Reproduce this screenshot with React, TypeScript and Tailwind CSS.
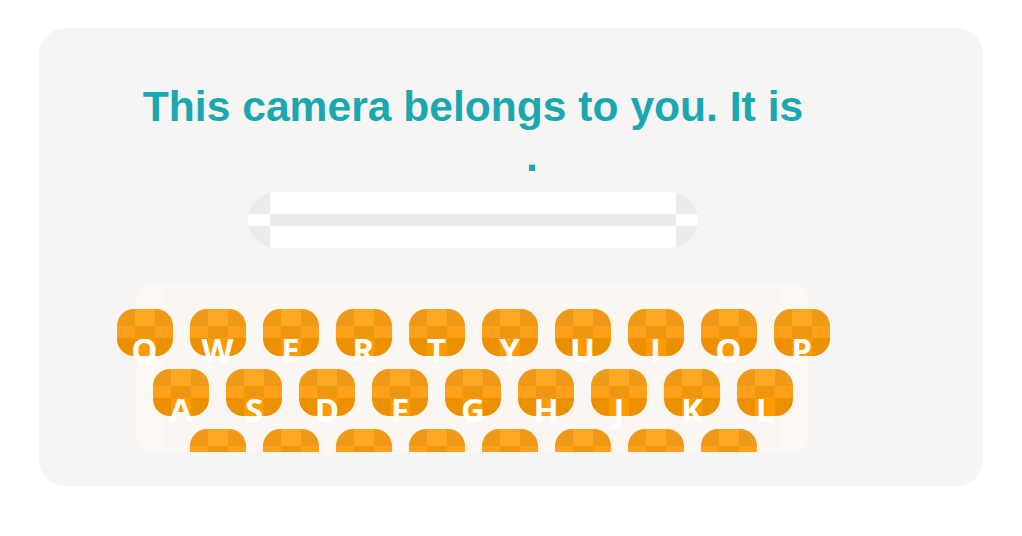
import React from "react";

const ROWS = [
  ["Q", "W", "E", "R", "T", "Y", "U", "I", "O", "P"],
  ["A", "S", "D", "F", "G", "H", "J", "K", "L"],
  ["Z", "X", "C", "V", "B", "N", "M", "⌫"],
];

// the key art: a 3x3 tile that shows its slices
function KeyTile() {
  return (
    <div className="grid h-[47px] w-[56px] grid-cols-[18px_20px_18px] grid-rows-[17px_12px_18px] overflow-hidden rounded-[17px]">
      <div className="bg-[#ee9a18]" />
      <div className="bg-[#ffa622]" />
      <div className="bg-[#ee9a18]" />
      <div className="bg-[#ffa01a]" />
      <div className="bg-[#ee960e]" />
      <div className="bg-[#ffa01a]" />
      <div className="bg-[#eb9100]" />
      <div className="bg-[#ff9a00]" />
      <div className="bg-[#eb9100]" />
    </div>
  );
}

function Key({ label }: { label: string }) {
  return (
    <div className="relative shrink-0">
      <KeyTile />
      <span className="absolute inset-x-0 top-[24px] text-center font-['Open_Sans',sans-serif] text-[33px] font-bold leading-none text-white">
        {label}
      </span>
    </div>
  );
}

function AnswerField() {
  return (
    <div className="grid h-[56px] w-[450px] grid-cols-[22px_1fr_22px] grid-rows-[22px_12px_22px] overflow-hidden rounded-full">
      <div className="bg-[#ebebeb]" />
      <div className="bg-white" />
      <div className="bg-[#ebebeb]" />
      <div className="bg-white" />
      <div className="bg-[#ebebeb]" />
      <div className="bg-white" />
      <div className="bg-[#ebebeb]" />
      <div className="bg-white" />
      <div className="bg-[#ebebeb]" />
    </div>
  );
}

export default function App() {
  return (
    <div className="min-h-screen bg-white px-[39px] pt-[28px]">
      <div className="h-[458px] rounded-[26px] bg-[#f6f5f4] pl-[54px] pt-[53px]">
        <div className="flex w-[760px] flex-col items-center">
          <h1 className="w-full text-center font-['Liberation_Sans',Arial,sans-serif] text-[42.6px] font-bold leading-[50px] text-[#19a8b0]">
            This camera belongs to you. It is{" "}
            <span className="whitespace-nowrap">
              <span className="inline-block w-[118px]" />.
            </span>
          </h1>

          <div className="mt-[11px]">
            <AnswerField />
          </div>

          <div className="relative mt-[35px] h-[169px] w-full overflow-hidden">
            <div className="absolute inset-y-0 left-[44px] grid w-[671px] grid-cols-[27px_1fr_27px]">
              <div className="rounded-l-[14px] bg-[#fbf8f5]" />
              <div className="bg-[#faf6f2]" />
              <div className="rounded-r-[14px] bg-[#fbf8f5]" />
            </div>
            <div className="relative flex flex-col items-center gap-[13px] pt-[26px]">
              {ROWS.map((row, i) => (
                <div key={i} className="flex gap-[17px]">
                  {row.map((k) => (
                    <Key key={k} label={k} />
                  ))}
                </div>
              ))}
            </div>
          </div>
        </div>
      </div>
    </div>
  );
}
